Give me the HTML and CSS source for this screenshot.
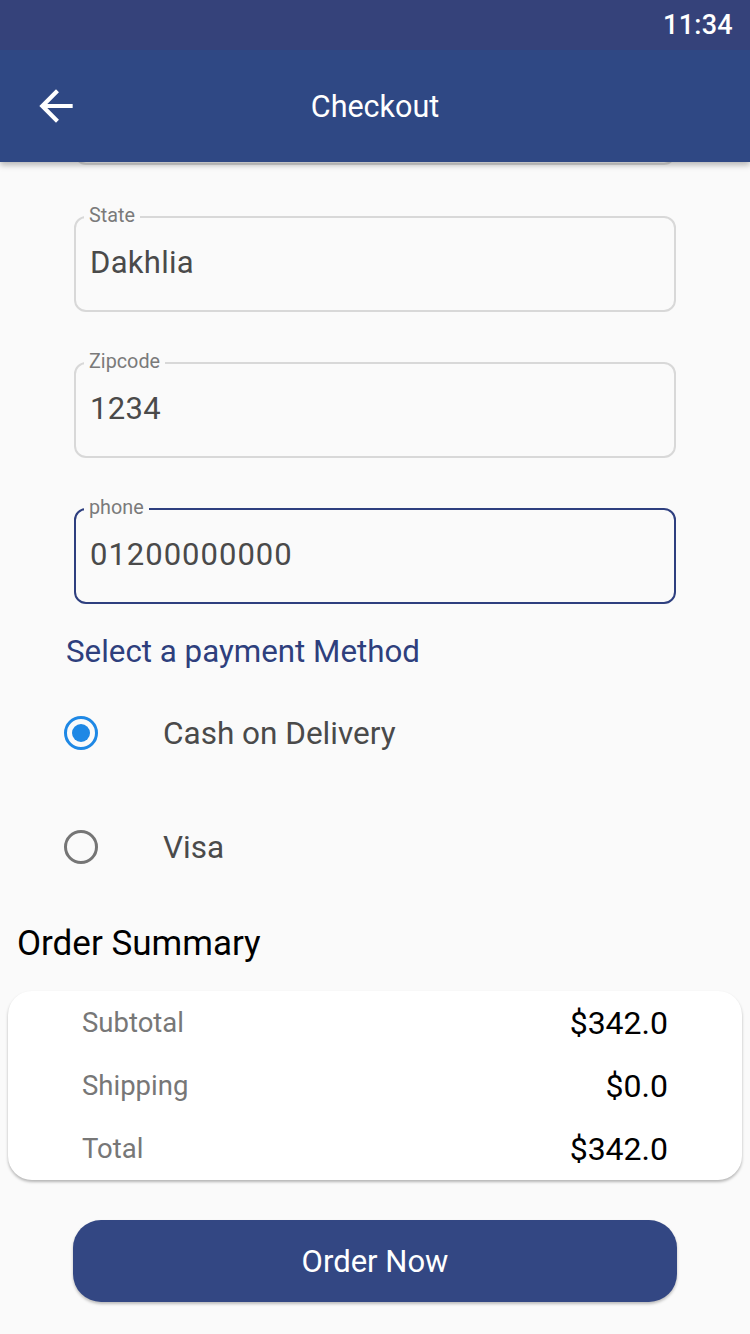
FILE: index.html
```html
<!DOCTYPE html>
<html>
<head>
<meta charset="utf-8">
<link rel="stylesheet" href="styles.css">
</head>
<body>
<div class="screen">
  <div class="status"><span class="time">11:34</span></div>
  <header class="appbar">
    <button class="back" aria-label="Back">
      <svg width="48" height="48" viewBox="0 0 24 24"><path fill="#fff" d="M20 11H7.83l5.59-5.59L12 4l-8 8 8 8 1.41-1.41L7.83 13H20v-2z"/></svg>
    </button>
    <h1 class="title">Checkout</h1>
    <div></div>
  </header>
  <main class="content">
    <div class="field peek"></div>
    <div class="field"><span class="label">State</span><span class="value">Dakhlia</span></div>
    <div class="field"><span class="label">Zipcode</span><span class="value">1234</span></div>
    <div class="field focused"><span class="label">phone</span><span class="value phone">01200000000</span></div>
    <h2 class="pay-title">Select a payment Method</h2>
    <div class="radio-row first"><span class="radio checked"></span><span class="radio-text">Cash on Delivery</span></div>
    <div class="radio-row"><span class="radio"></span><span class="radio-text">Visa</span></div>
    <h2 class="summary-title">Order Summary</h2>
    <div class="card">
      <div class="row"><span class="k">Subtotal</span><span class="v">$342.0</span></div>
      <div class="row"><span class="k">Shipping</span><span class="v">$0.0</span></div>
      <div class="row"><span class="k">Total</span><span class="v">$342.0</span></div>
    </div>
    <button class="order">Order Now</button>
  </main>
</div>
</body>
</html>
```
FILE: styles.css
```css
* { box-sizing: border-box; }
html, body { margin: 0; padding: 0; }
body { background: #fafafa; font-family: Roboto, "Noto Sans", sans-serif; }
.screen { width: 750px; height: 1334px; overflow: hidden; position: relative; }
.status {
  height: 50px; background: #35427a; display: flex; justify-content: flex-end; align-items: center;
  padding-right: 17px; position: relative; z-index: 3;
}
.time { color: #fff; font-size: 27px; font-weight: 500; letter-spacing: 0.3px; }
.appbar {
  height: 112px; background: #2f4884; display: grid; grid-template-columns: 1fr auto 1fr; align-items: center;
  position: relative; z-index: 2; box-shadow: 0 3px 6px rgba(0,0,0,0.28);
}
.back { background: none; border: 0; padding: 0; margin-left: 33px; width: 48px; height: 48px; display: flex; cursor: pointer; }
.back svg { width: 50px; height: 50px; margin: -1px 0 0 -2px; }
.title { margin: 0; color: #fff; font-size: 30.5px; font-weight: 400; }
.content { padding: 0 74px; display: flex; flex-direction: column; }
.field {
  height: 96px; border: 2px solid #d8d8d8; border-radius: 12px; position: relative;
  display: flex; align-items: center; padding-left: 14px; background: transparent;
}
.field.peek { margin-top: -93px; }
.field.peek + .field { margin-top: 51px; }
.field + .field { margin-top: 50px; }
.field.focused { border-color: #2e3f7f; }
.label {
  position: absolute; top: -13px; left: 8px; padding: 0 5px; background: #fafafa;
  font-size: 19.8px; color: #7a7a7a; line-height: 22px;
}
.value { font-size: 31px; letter-spacing: 0.3px; color: #4a4a4a; margin-top: -4px; }
.value.phone { letter-spacing: 1px; }
.pay-title { margin: 28px 0 0 -8px; font-size: 31.3px; font-weight: 400; color: #2e3f7d; line-height: 40px; }
.radio-row { display: flex; align-items: center; height: 60px; margin-left: -10px; }
.radio-row.first { margin-top: 31px; }
.radio-row + .radio-row { margin-top: 54px; }
.radio { width: 34px; height: 34px; border-radius: 50%; border: 3.5px solid #757575; position: relative; flex: none; }
.radio.checked { border-color: #1e88e5; }
.radio.checked::after {
  content: ""; position: absolute; left: 50%; top: 50%; width: 18px; height: 18px; margin: -9px 0 0 -9px;
  border-radius: 50%; background: #1e88e5;
}
.radio-text { margin-left: 65px; font-size: 31.5px; color: #4a4a4a; }
.summary-title { margin: 45px 0 0 -57px; font-size: 35px; font-weight: 400; color: #000; line-height: 44px; }
.card {
  margin: 25px -66px 0; background: #fff; border-radius: 24px; box-shadow: 0 2px 3px rgba(0,0,0,0.28);
  padding: 0 74px; height: 189px; display: flex; flex-direction: column;
}
.row { height: 63px; display: flex; justify-content: space-between; align-items: center; }
.k { font-size: 27.5px; color: #777; }
.v { font-size: 32px; color: #000; }
.order {
  margin: 40px -1px 0; height: 82px; border: 0; border-radius: 28px; background: #334783; color: #fff;
  font-family: inherit; font-size: 31px; box-shadow: 0 2px 3px rgba(0,0,0,0.25);
}
```
